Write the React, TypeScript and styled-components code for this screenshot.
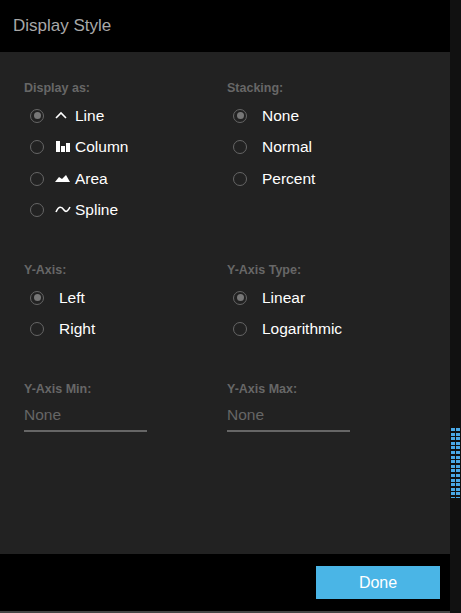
import React from "react";
import styled, { createGlobalStyle } from "styled-components";

const G = createGlobalStyle`
  html,body{margin:0;padding:0;background:#111;}
  body{font-family:"Liberation Sans",Arial,sans-serif;}
`;
const Page = styled.div`display:flex;width:461px;height:613px;background:#111;`;
const Dialog = styled.div`width:450px;height:611px;display:flex;flex-direction:column;background:#222;border-bottom:2px solid #444;`;
const Header = styled.div`height:52px;background:#000;display:flex;align-items:center;padding-left:13px;color:#a8a8a8;font-size:17px;`;
const Body = styled.div`flex:1;padding:29px 24px 0;display:grid;grid-template-columns:203px 1fr;grid-auto-rows:min-content;`;
const Section = styled.div<{ h: number }>`height:${p => p.h}px;`;
const Label = styled.div`color:#676767;font-weight:bold;font-size:12.5px;height:14px;margin-bottom:5px;`;
const Row = styled.div`display:flex;align-items:center;height:31.5px;color:#fff;font-size:15.5px;`;
const Radio = styled.span<{ on?: boolean; mr: number }>`width:12px;height:12px;border:1px solid #666;border-radius:50%;margin-left:6px;margin-right:${p => p.mr}px;display:flex;align-items:center;justify-content:center;box-sizing:content-box;
  &::after{content:"";width:7px;height:7px;border-radius:50%;background:${p => (p.on ? "#777" : "transparent")};}`;
const Icon = styled.svg`width:16px;height:12px;margin-right:4px;`;
const Input = styled.div`width:123px;border-bottom:2px solid #666;color:#666;font-size:15.5px;padding-bottom:6px;margin-top:10px;`;
const Footer = styled.div`height:57px;background:#000;display:flex;align-items:center;justify-content:flex-end;padding-right:10px;`;
const Button = styled.div`width:124px;height:33px;background:#4ab5e6;color:#fff;font-size:16px;display:flex;align-items:center;justify-content:center;`;
const Strip = styled.div`flex:1;display:flex;flex-direction:column;padding-top:428px;align-items:center;`;
const Dots = styled.div`width:9px;height:70px;background:repeating-linear-gradient(to bottom,#4aa8e6 0 3px,transparent 3px 4.6px);-webkit-mask:repeating-linear-gradient(to right,#000 0 4px,transparent 4px 5px);`;

const icons: Record<string, React.ReactNode> = {
  Line: <polyline points="1,8 6,3 11,8" fill="none" stroke="#fff" strokeWidth="1.6" />,
  Column: <g fill="#fff"><rect x="1" y="0" width="4" height="11" /><rect x="6" y="5" width="4" height="6" /><rect x="11" y="2" width="4" height="9" /></g>,
  Area: <polygon points="0,9 4,4 7,6 11,2 15,9" fill="#fff" />,
  Spline: <path d="M1,8 C4,1 7,3 9,6 S13,7 15,3" fill="none" stroke="#fff" strokeWidth="1.6" />,
};

const R = ({ t, on, icon }: { t: string; on?: boolean; icon?: boolean }) => (
  <Row>
    <Radio on={on} mr={icon ? 11 : 15} />
    {icon && <Icon viewBox="0 0 16 12">{icons[t]}</Icon>}
    {t}
  </Row>
);

export default function App() {
  return (
    <Page>
      <G />
      <Dialog>
        <Header>Display Style</Header>
        <Body>
          <Section h={182}>
            <Label>Display as:</Label>
            <R t="Line" on icon /><R t="Column" icon /><R t="Area" icon /><R t="Spline" icon />
          </Section>
          <Section h={182}>
            <Label>Stacking:</Label>
            <R t="None" on /><R t="Normal" /><R t="Percent" />
          </Section>
          <Section h={119}>
            <Label>Y-Axis:</Label>
            <R t="Left" on /><R t="Right" />
          </Section>
          <Section h={119}>
            <Label>Y-Axis Type:</Label>
            <R t="Linear" on /><R t="Logarithmic" />
          </Section>
          <Section h={80}>
            <Label>Y-Axis Min:</Label>
            <Input>None</Input>
          </Section>
          <Section h={80}>
            <Label>Y-Axis Max:</Label>
            <Input>None</Input>
          </Section>
        </Body>
        <Footer><Button>Done</Button></Footer>
      </Dialog>
      <Strip><Dots /></Strip>
    </Page>
  );
}
